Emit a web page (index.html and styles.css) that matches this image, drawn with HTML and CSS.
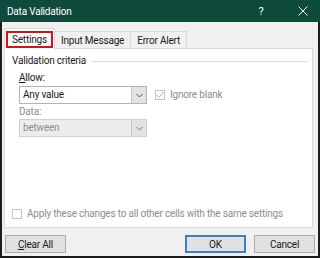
FILE: index.html
```html
<!doctype html>
<html lang="en">
  <head>
    <meta charset="UTF-8" />
    <title>Data Validation</title>
    <link rel="stylesheet" href="styles.css">
  </head>
  <body>
    <div class="c-dialog">
      <div class="c-dialog__titlebar">
        <span class="c-dialog__title">Data Validation</span>
        <span class="c-dialog__help">?</span>
        <span class="c-dialog__close">
          <svg width="10" height="10" viewBox="0 0 10 10"><path d="M0.5 0.5 L9.5 9.5 M9.5 0.5 L0.5 9.5" stroke="#fff" stroke-width="1" fill="none"/></svg>
        </span>
      </div>

      <div class="c-dialog__body">
        <div class="c-tabs">
          <div class="c-tab c-tab--active"><span class="c-tab__mark">Settings</span></div>
          <div class="c-tab">Input Message</div>
          <div class="c-tab">Error Alert</div>
        </div>

        <div class="c-panel">
          <div class="c-group__legend">Validation criteria</div>

          <div class="c-field">
            <div class="c-field__label"><u>A</u>llow:</div>
            <div class="c-row">
              <div class="c-select">
                <span class="c-select__value">Any value</span>
                <span class="c-select__arrow">
                  <svg width="7" height="5" viewBox="0 0 7 5"><path d="M0.5 1 L3.5 4 L6.5 1" stroke="#555" fill="none"/></svg>
                </span>
              </div>
              <label class="c-check c-check--disabled">
                <span class="c-check__box">
                  <svg width="10" height="10" viewBox="0 0 10 10"><path d="M1.5 5 L4 7.5 L8.5 2" stroke="#b0b0b0" fill="none"/></svg>
                </span>
                Ignore blank
              </label>
            </div>
          </div>

          <div class="c-field c-field--second">
            <div class="c-field__label c-field__label--disabled">Data:</div>
            <div class="c-select c-select--disabled">
              <span class="c-select__value">between</span>
              <span class="c-select__arrow">
                <svg width="7" height="5" viewBox="0 0 7 5"><path d="M0.5 1 L3.5 4 L6.5 1" stroke="#777" fill="none"/></svg>
              </span>
            </div>
          </div>

          <label class="c-check c-check--disabled c-check--apply">
            <span class="c-check__box"></span>
            Apply these changes to all other cells with the same settings
          </label>
        </div>

        <div class="c-buttons">
          <button class="c-button"><u>C</u>lear All</button>
          <span class="c-buttons__spacer"></span>
          <button class="c-button c-button--default">OK</button>
          <button class="c-button">Cancel</button>
        </div>
      </div>
    </div>
  </body>
</html>
```

FILE: styles.css
```css
html,
body {
  margin: 0;
  padding: 0;
}

body {
  width: 320px;
  height: 258px;
  overflow: hidden;
  font-family: Roboto, 'Noto Sans', sans-serif;
  font-size: 10px;
  letter-spacing: -0.2px;
  color: #1a1a1a;
}

.c-dialog {
  box-sizing: border-box;
  width: 320px;
  height: 258px;
  display: flex;
  flex-direction: column;
  background: #f0f0f0;
  border: 2px solid #1c1c1c;
  border-top: 0;
}

.c-dialog__titlebar {
  height: 22px;
  margin: 0 -2px;
  display: flex;
  align-items: center;
  background: #0f4b3c;
  color: #fff;
}

.c-dialog__title {
  flex: 1;
  padding-left: 7px;
  font-size: 10px;
}

.c-dialog__help {
  width: 10px;
  margin-right: 32px;
  font-size: 11px;
  text-align: center;
}

.c-dialog__close {
  display: flex;
  margin-right: 12px;
}

.c-dialog__body {
  flex: 1;
  display: flex;
  flex-direction: column;
  padding: 6px 5px 3px 2px;
}

.c-tabs {
  display: flex;
  height: 20px;
  position: relative;
  z-index: 1;
}

.c-tab {
  box-sizing: border-box;
  display: flex;
  align-items: center;
  padding: 0 6px;
  margin-top: 3px;
  height: 17px;
  border: 1px solid #d9d9d9;
  border-bottom: 0;
  border-left: 0;
  background: #f0f0f0;
}

.c-tab--active {
  margin-top: 0;
  height: 21px;
  padding: 0 1px;
  border-left: 1px solid #d9d9d9;
  background: #fff;
}

.c-tab__mark {
  display: block;
  padding: 0 4px;
  line-height: 13px;
  border: 2px solid #d2121c;
}

.c-panel {
  flex: 1;
  display: flex;
  flex-direction: column;
  background: #fff;
  border: 1px solid #d9d9d9;
  padding: 6px 4px 7px 7px;
}

.c-group__legend {
  display: flex;
  align-items: center;
  gap: 5px;
  line-height: 12px;
}

.c-group__legend::after {
  content: '';
  flex: 1;
  border-top: 1px solid #dcdcdc;
}

.c-field {
  padding-left: 7px;
  margin-top: 5px;
}

.c-field--second {
  margin-top: 2px;
}

.c-field__label {
  line-height: 12px;
  margin-bottom: 2px;
}

.c-field--second .c-field__label {
  margin-bottom: 1px;
}

.c-field__label--disabled {
  color: #8d8d8d;
}

.c-row {
  display: flex;
  align-items: center;
  gap: 8px;
}

.c-select {
  box-sizing: border-box;
  width: 128px;
  height: 18px;
  display: flex;
  align-items: stretch;
  border: 1px solid #b4b4b4;
  background: #fff;
}

.c-select__value {
  flex: 1;
  padding-left: 3px;
  line-height: 16px;
}

.c-select__arrow {
  width: 14px;
  display: flex;
  align-items: center;
  justify-content: center;
  background: #e3e3e3;
  border-left: 1px solid #c8c8c8;
}

.c-select--disabled {
  background: #ececec;
  border-color: #cfcfcf;
  color: #8d8d8d;
}

.c-check {
  display: flex;
  align-items: center;
  gap: 5px;
  line-height: 12px;
}

.c-check__box {
  box-sizing: border-box;
  width: 10px;
  height: 10px;
  display: flex;
  border: 1px solid #c4c4c4;
  background: #fff;
}

.c-check__box svg {
  margin: -1px;
}

.c-check--disabled {
  color: #8d8d8d;
}

.c-check--apply {
  margin-top: auto;
}

.c-buttons {
  display: flex;
  gap: 8px;
  margin: 7px -2px 0 1px;
}

.c-buttons__spacer {
  flex: 1;
}

.c-button {
  box-sizing: border-box;
  width: 61px;
  height: 18px;
  padding: 0;
  font-family: inherit;
  font-size: 10px;
  letter-spacing: inherit;
  color: #1a1a1a;
  background: #e1e1e1;
  border: 1px solid #adadad;
}

.c-button--default {
  border: 2px solid #3a7fcf;
}
```
